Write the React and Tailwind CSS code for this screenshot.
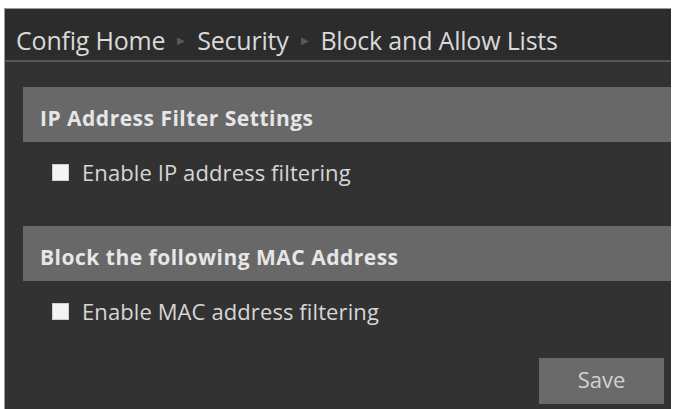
export default function App() {
  const font = { fontFamily: '"Open Sans", "Noto Sans", sans-serif' };

  const Section = ({ title, label }) => (
    <div>
      <div className="h-[55px] bg-[#686868] flex items-center pl-[17px] pt-[9px]">
        <span className="text-[21px] font-bold text-[#e6e6e6] tracking-[0.5px]">{title}</span>
      </div>
      <label className="flex items-center h-[60px] pl-[29px] gap-[13px]">
        <span className="w-[17px] h-[17px] bg-[#f4f4f4] border border-[#cfcfcf]" />
        <span className="text-[22px] text-[#d6d6d6] tracking-[0.1px]">{label}</span>
      </label>
    </div>
  );

  return (
    <div className="w-[674px] h-[409px] bg-white pt-[8px] pl-[4px] pr-[3px] overflow-hidden" style={font}>
      <div className="h-full bg-[#323232] border-l border-t border-[#9a9a9a]">
        {/* Breadcrumb */}
        <div className="h-[53px] bg-[#2c2c2c] border-b-2 border-[#565656] flex items-center pl-[11px] pt-[12px] text-[25px] text-[#d9d9d9] tracking-[-0.2px]">
          <span>Config Home</span>
          <span className="mx-[12px] text-[10px] text-[#5a5a5a]">▶</span>
          <span>Security</span>
          <span className="mx-[12px] text-[10px] text-[#5a5a5a]">▶</span>
          <span>Block and Allow Lists</span>
        </div>

        <div className="pl-[18px] pt-[25px]">
          <Section title="IP Address Filter Settings" label="Enable IP address filtering" />
          <div className="h-[24px]" />
          <Section title="Block the following MAC Address" label="Enable MAC address filtering" />
          <div className="flex justify-end pr-[7px] mt-[17px]">
            <button className="w-[125px] h-[46px] bg-[#6a6a6a] text-[#d2d2d2] text-[22px] pb-[4px]">
              Save
            </button>
          </div>
        </div>
      </div>
    </div>
  );
}
